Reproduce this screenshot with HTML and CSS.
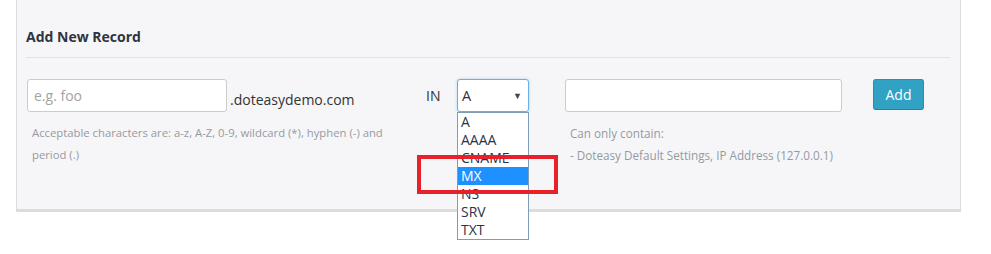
FILE: index.html
```html
<!DOCTYPE html>
<html>
<head>
<meta charset="utf-8">
<link rel="stylesheet" href="styles.css">
</head>
<body>
<div class="panel">
  <h3 class="title">Add New Record</h3>
  <hr class="rule">
  <div class="form">
    <div class="cell name-cell">
      <div class="input name-input"><span class="placeholder">e.g. foo</span></div>
      <span class="domain">.doteasydemo.com</span>
    </div>
    <div class="cell type-cell">
      <span class="in">IN</span>
      <div class="select-wrap">
        <div class="select"><span>A</span><span class="arrow">▼</span></div>
        <ul class="options">
          <li>A</li>
          <li>AAAA</li>
          <li>CNAME</li>
          <li class="selected">MX</li>
          <li>NS</li>
          <li>SRV</li>
          <li>TXT</li>
        </ul>
        <div class="highlight-box"></div>
      </div>
    </div>
    <div class="cell value-cell">
      <div class="input value-input"></div>
    </div>
    <div class="cell btn-cell">
      <button class="add">Add</button>
    </div>
    <p class="help name-help">Acceptable characters are: a-z, A-Z, 0-9, wildcard (*), hyphen (-) and period (.)</p>
    <div></div>
    <p class="help value-help">Can only contain:<br>- Doteasy Default Settings, IP Address (127.0.0.1)</p>
    <div></div>
  </div>
</div>
</body>
</html>
```
FILE: styles.css
```css
* { box-sizing: border-box; }
html, body { margin: 0; padding: 0; background: #fff; }
body { font-family: "Open Sans", "Noto Sans", sans-serif; color: #333; min-height: 254px; }

.panel {
  margin-left: 16px;
  width: 945px;
  height: 212px;
  background: #f6f6f8;
  border-left: 1px solid #dcdcdc;
  border-right: 1px solid #dcdcdc;
  border-bottom: 3px solid #dcdcdc;
  padding: 27px 10px 0 9px;
  position: relative;
}

.title {
  margin: 0;
  font-size: 14px;
  font-weight: 700;
  line-height: 20px;
  color: #2e3540;
}

.rule {
  margin: 10px 0 0 0;
  border: 0;
  border-top: 1px solid #e2e2e6;
  height: 0;
}

.form {
  display: grid;
  grid-template-columns: 399px 139px 308px auto;
  margin-top: 21px;
  margin-left: 1px;
}

.cell { display: flex; align-items: center; height: 33px; }

.input {
  background: #fff;
  border: 1px solid #ccc;
  border-radius: 3px;
  height: 33px;
  display: flex;
  align-items: center;
  padding-left: 6px;
}
.name-input { width: 200px; }
.value-input { width: 277px; }
.placeholder { color: #a3a3a3; font-size: 14px; }

.domain { margin-left: 3px; font-size: 14px; color: #333; padding-top: 8px; }

.in { width: 31px; font-size: 14px; color: #333; }

.select-wrap { position: relative; z-index: 5; }
.select {
  width: 72px;
  height: 33px;
  background: #fff;
  border: 1px solid #66afe9;
  border-radius: 3px;
  box-shadow: 0 0 3px rgba(102, 175, 233, 0.5);
  display: flex;
  align-items: center;
  justify-content: space-between;
  padding: 0 6px 0 4px;
  font-size: 14.5px;
  color: #333;
}
.arrow { font-size: 9px; color: #444; }

.options {
  position: absolute;
  left: 0;
  top: 33px;
  width: 72px;
  margin: 0;
  padding: 0;
  list-style: none;
  background: #fff;
  border: 1px solid #7f9db9;
  z-index: 2;
}
.options li {
  height: 18px;
  line-height: 18px;
  font-size: 14px;
  padding-left: 3px;
  color: #2b3348;
}
.options li.selected { background: #1e90ff; color: #fff; }

.highlight-box {
  position: absolute;
  left: -40px;
  top: 76px;
  width: 141px;
  height: 39px;
  border: 4px solid #e8202a;
  z-index: 3;
}

.add {
  width: 51px;
  height: 31px;
  margin-top: -2px;
  background: #31a2c3;
  border: 1px solid #2a8fae;
  border-bottom-color: #25809c;
  border-radius: 3px;
  color: #fff;
  font-family: "Open Sans", sans-serif;
  font-size: 14px;
  padding: 0;
}

.help {
  margin: 0;
  padding-top: 10px;
  line-height: 22px;
  color: #959aa2;
}
.name-help { padding-left: 5px; width: 375px; font-size: 11.3px; }
.value-help { padding-left: 5px; font-size: 11.7px; }
```
